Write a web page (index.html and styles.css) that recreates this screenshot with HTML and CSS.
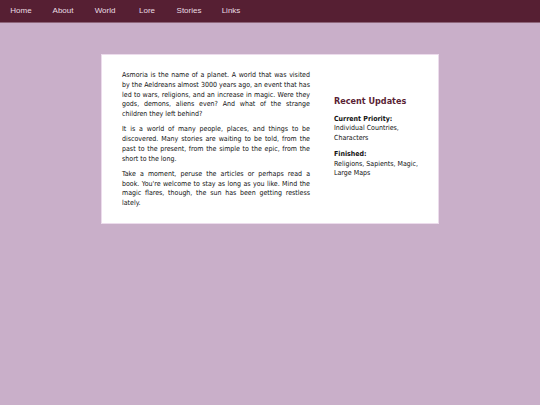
FILE: index.html
```html
<!DOCTYPE html>
<html>
<head>
<meta charset="utf-8">
<link rel="stylesheet" href="styles.css">
</head>
<body>
<nav class="nav">
  <a class="nav-item">Home</a>
  <a class="nav-item">About</a>
  <a class="nav-item">World</a>
  <a class="nav-item">Lore</a>
  <a class="nav-item">Stories</a>
  <a class="nav-item">Links</a>
</nav>
<main class="card">
  <div class="intro">
    <p>Asmoria is the name of a planet. A world that was visited by the Aeldreans almost 3000 years ago, an event that has led to wars, religions, and an increase in magic. Were they gods, demons, aliens even? And what of the strange children they left behind?</p>
    <p>It is a world of many people, places, and things to be discovered. Many stories are waiting to be told, from the past to the present, from the simple to the epic, from the short to the long.</p>
    <p>Take a moment, peruse the articles or perhaps read a book. You're welcome to stay as long as you like. Mind the magic flares, though, the sun has been getting restless lately.</p>
  </div>
  <aside class="updates">
    <h2 class="updates-title">Recent Updates</h2>
    <div class="update">
      <div class="update-label">Current Priority:</div>
      <div>Individual Countries, Characters</div>
    </div>
    <div class="update">
      <div class="update-label">Finished:</div>
      <div>Religions, Sapients, Magic, Large Maps</div>
    </div>
  </aside>
</main>
</body>
</html>
```
FILE: styles.css
```css
html, body {
  margin: 0;
  padding: 0;
}
body {
  background: #c9afc9;
  font-family: "DejaVu Sans Condensed", "DejaVu Sans", Verdana, sans-serif;
  font-stretch: semi-condensed;
  color: #111;
}
.nav {
  display: flex;
  height: 22px;
  background: #561f33;
  border-bottom: 1px solid #8d6579;
}
.nav-item {
  width: 42px;
  text-align: center;
  font-family: "Liberation Sans", Arial, sans-serif;
  font-stretch: normal;
  font-size: 8px;
  line-height: 22px;
  color: #eadde3;
}
.card {
  width: 338px;
  box-sizing: border-box;
  margin: 31px auto 0;
  background: #fff;
  border: 1px solid #ecdcec;
  padding: 16px 10px 14px 20px;
  display: flex;
  gap: 24px;
  font-size: 7px;
  line-height: 9.75px;
}
.intro {
  width: 188px;
  flex: none;
  text-align: justify;
}
.intro p {
  margin: 0 0 5.5px;
}
.intro p:last-child {
  margin-bottom: 0;
}
.updates {
  flex: 1;
  align-self: center;
}
.updates-title {
  margin: 0 0 8px;
  font-size: 9px;
  line-height: 12px;
  color: #5a1f35;
}
.update {
  margin-bottom: 6px;
}
.update-label {
  font-weight: bold;
}
```
